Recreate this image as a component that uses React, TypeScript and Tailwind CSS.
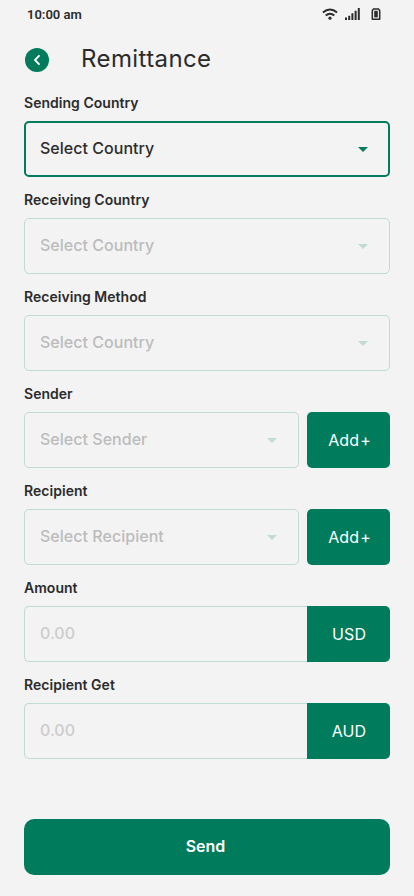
type SelectProps = { placeholder: string; active?: boolean };

function SelectBox({ placeholder, active }: SelectProps) {
  return (
    <button
      type="button"
      className={
        active
          ? "flex h-14 min-w-0 flex-1 items-center justify-between rounded-[5px] border-2 border-[#007b5b] pl-3.5 pr-5 text-[#2b2b2b]"
          : "flex h-14 min-w-0 flex-1 items-center justify-between rounded-[5px] border border-[#c0dcd2] pl-[15px] pr-[21px] text-[#bcbcbc]"
      }
    >
      <span className="pb-0.5 text-base font-medium leading-6 tracking-[0.03px]">{placeholder}</span>
      <svg width="10" height="5" viewBox="0 0 10 5" className={active ? "text-[#007b5b]" : "text-[#c0dcd2]"}>
        <path d="M0 0h10L5 5z" fill="currentColor" />
      </svg>
    </button>
  );
}

function Field({ label, children }: { label: string; children: React.ReactNode }) {
  return (
    <div>
      <div className="h-[27px] text-sm font-semibold leading-[18px] tracking-[0.03px] text-[#2b2b2b]">{label}</div>
      <div className="flex gap-2">{children}</div>
    </div>
  );
}

function AddButton() {
  return (
    <button type="button" className="flex h-14 w-[83px] items-center justify-center gap-px rounded-[5px] bg-[#007b5b] pl-0.5 text-base tracking-[0.1px] text-white">
      <span>Add</span>
      <span>+</span>
    </button>
  );
}

function AmountBox({ currency }: { currency: string }) {
  return (
    <div className="flex h-14 flex-1">
      <div className="flex flex-1 items-center rounded-l-[5px] border border-r-0 border-[#c0dcd2] pb-0.5 pl-[15px] text-base font-medium text-[#cccccc]">
        0.00
      </div>
      <div className="flex w-[83px] items-center justify-center rounded-r-[5px] bg-[#007b5b] pl-px text-base tracking-[0.16px] text-white">
        {currency}
      </div>
    </div>
  );
}

export default function App() {
  return (
    <main className="flex h-[896px] w-[414px] flex-col bg-[#f3f3f3] px-6 font-['Inter',sans-serif]">
      <div className="flex h-[30px] items-center justify-between pl-[3px] pr-[9px]">
        <span className="font-['Roboto',sans-serif] text-[13px] font-semibold text-[#2b2b2b]">10:00 am</span>
        <div className="flex items-center pb-0.5 text-[#2b2b2b]">
          <svg width="16" height="12" viewBox="0 0 16 12" fill="none" stroke="currentColor" strokeWidth="2">
            <path d="M.9 4.6Q8-1.6 15.1 4.6M3.7 7.5q4.3-3.6 8.6 0" />
            <circle cx="8" cy="10.2" r="1.6" fill="currentColor" stroke="none" />
          </svg>
          <svg className="ml-[7px]" width="15" height="12" viewBox="0 0 15 12" fill="currentColor">
            <path d="M0 9.5h2V12H0zM3.2 7.7h2V12h-2zM6.4 5.3h2V12h-2zM9.6 2.8h2V12h-2zM12.8 0h2v12h-2z" />
          </svg>
          <svg className="ml-[11px]" width="10" height="12" viewBox="0 0 10 12" fill="none" stroke="currentColor">
            <path d="M2.5 1h5l1.2 1.4v8.8H1.3V2.4z" strokeWidth="1.5" strokeLinejoin="round" />
            <path d="M5 2.8v6.6" strokeWidth="3.6" />
          </svg>
        </div>
      </div>

      <header className="flex h-16 items-center pb-1 pl-px">
        <button type="button" className="flex size-6 items-center justify-center rounded-full bg-[#007b5b]">
          <svg className="mr-px" width="8" height="10" viewBox="0 0 8 10" fill="none" stroke="white" strokeWidth="1.8" strokeLinecap="round" strokeLinejoin="round">
            <path d="M6 .9 2 5l4 4.1" />
          </svg>
        </button>
        <h1 className="ml-8 pb-0.5 text-2xl tracking-[0.4px] text-[#2b2b2b]">Remittance</h1>
      </header>

      <form className="flex flex-col gap-3.5">
        <Field label="Sending Country">
          <SelectBox placeholder="Select Country" active />
        </Field>
        <Field label="Receiving Country">
          <SelectBox placeholder="Select Country" />
        </Field>
        <Field label="Receiving Method">
          <SelectBox placeholder="Select Country" />
        </Field>
        <Field label="Sender">
          <SelectBox placeholder="Select Sender" />
          <AddButton />
        </Field>
        <Field label="Recipient">
          <SelectBox placeholder="Select Recipient" />
          <AddButton />
        </Field>
        <Field label="Amount">
          <AmountBox currency="USD" />
        </Field>
        <Field label="Recipient Get">
          <AmountBox currency="AUD" />
        </Field>
      </form>

      <button type="button" className="mt-[60px] h-14 w-full rounded-[10px] bg-[#007b5b] pb-0.5 pr-[3px] text-base font-semibold text-white">
        Send
      </button>
    </main>
  );
}
